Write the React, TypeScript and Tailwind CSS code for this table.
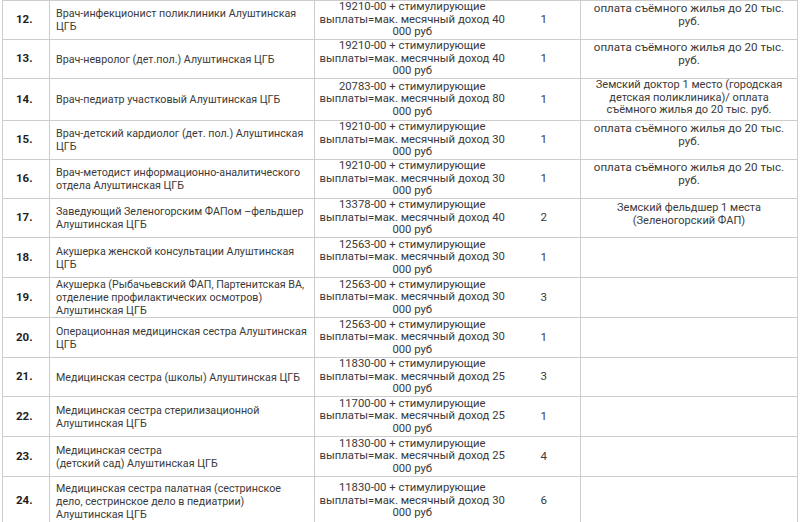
import React from 'react'

type Row = {
  n: string
  title: string[]
  pay: string[]
  count: string
  note?: string[]
  noteSize?: string
  h: string
}

const rent = ['оплата съёмного жилья до 20 тыс.', 'руб.']

const pay = (base: string, max: string) => [
  `${base} + стимулирующие`,
  `выплаты=мак. месячный доход ${max}`,
  '000 руб',
]

const rows: Row[] = [
  { n: '12.', title: ['Врач-инфекционист поликлиники Алуштинская', 'ЦГБ'], pay: pay('19210-00', '40'), count: '1', note: rent, h: 'h-[39px]' },
  { n: '13.', title: ['Врач-невролог (дет.пол.) Алуштинская ЦГБ'], pay: pay('19210-00', '40'), count: '1', note: rent, h: 'h-[39px]' },
  {
    n: '14.',
    title: ['Врач-педиатр участковый Алуштинская ЦГБ'],
    pay: pay('20783-00', '80'),
    count: '1',
    note: ['Земский доктор 1 место (городская', 'детская поликлиника)/ оплата', 'съёмного жилья до 20 тыс. руб.'],
    noteSize: 'text-[11px] leading-[12.5px]',
    h: 'h-[42px]',
  },
  { n: '15.', title: ['Врач-детский кардиолог (дет. пол.) Алуштинская', 'ЦГБ'], pay: pay('19210-00', '30'), count: '1', note: rent, h: 'h-[39px]' },
  { n: '16.', title: ['Врач-методист информационно-аналитического', 'отдела Алуштинская ЦГБ'], pay: pay('19210-00', '30'), count: '1', note: rent, h: 'h-[39px]' },
  {
    n: '17.',
    title: ['Заведующий Зеленогорским ФАПом –фельдшер', 'Алуштинская ЦГБ'],
    pay: pay('13378-00', '40'),
    count: '2',
    note: ['Земский фельдшер 1 места', '(Зеленогорский ФАП)'],
    noteSize: 'text-[11px] leading-[13px] pt-[2px]',
    h: 'h-[39px]',
  },
  { n: '18.', title: ['Акушерка женской консультации Алуштинская', 'ЦГБ'], pay: pay('12563-00', '30'), count: '1', h: 'h-[40px]' },
  {
    n: '19.',
    title: ['Акушерка (Рыбачьевский ФАП, Партенитская ВА,', 'отделение профилактических осмотров)', 'Алуштинская ЦГБ'],
    pay: pay('12563-00', '30'),
    count: '3',
    h: 'h-[39px]',
  },
  { n: '20.', title: ['Операционная медицинская сестра Алуштинская', 'ЦГБ'], pay: pay('12563-00', '30'), count: '1', h: 'h-[40px]' },
  { n: '21.', title: ['Медицинская сестра (школы) Алуштинская ЦГБ'], pay: pay('11830-00', '25'), count: '3', h: 'h-[39px]' },
  { n: '22.', title: ['Медицинская сестра стерилизационной', 'Алуштинская ЦГБ'], pay: pay('11700-00', '25'), count: '1', h: 'h-[40px]' },
  { n: '23.', title: ['Медицинская сестра', '(детский сад) Алуштинская ЦГБ'], pay: pay('11830-00', '25'), count: '4', h: 'h-[40px]' },
  {
    n: '24.',
    title: ['Медицинская сестра палатная (сестринское', 'дело, сестринское дело в педиатрии)', 'Алуштинская ЦГБ'],
    pay: pay('11830-00', '30'),
    count: '6',
    h: 'h-[49px]',
  },
]

function Lines({ lines }: { lines: string[] }) {
  return (
    <>
      {lines.map((l, i) => (
        <div key={i} className="whitespace-nowrap">
          {l}
        </div>
      ))}
    </>
  )
}

export default function App() {
  return (
    <div className="w-[800px] h-[522px] overflow-hidden bg-white pl-[2px] font-['Roboto',sans-serif] text-[#3a3a3a]">
      <table className="table-fixed border-collapse w-[795px]">
        <colgroup>
          <col className="w-[47px]" />
          <col className="w-[265px]" />
          <col className="w-[195px]" />
          <col className="w-[71px]" />
          <col className="w-[217px]" />
        </colgroup>
        <tbody>
          {rows.map((r) => (
            <tr key={r.n} className={r.h}>
              <td className="border border-[#cdcdcd] pl-[13px] text-[11.5px] font-bold text-[#1f1f1f] align-middle">{r.n}</td>
              <td className="border border-[#cdcdcd] pl-[6px] text-[10.7px] leading-[13px] align-middle">
                <Lines lines={r.title} />
              </td>
              <td className="border-y border-l border-[#cdcdcd] text-center text-[11.3px] leading-[12.5px] align-middle">
                <Lines lines={r.pay} />
              </td>
              <td className="border-y border-r border-[#cdcdcd] text-center text-[11.5px] align-middle pr-[2px]">{r.count}</td>
              <td className={`border border-[#cdcdcd] text-center align-top ${r.noteSize ?? 'text-[11.6px] leading-[13px] pt-[1px]'}`}>
                {r.note && <Lines lines={r.note} />}
              </td>
            </tr>
          ))}
        </tbody>
      </table>
    </div>
  )
}
